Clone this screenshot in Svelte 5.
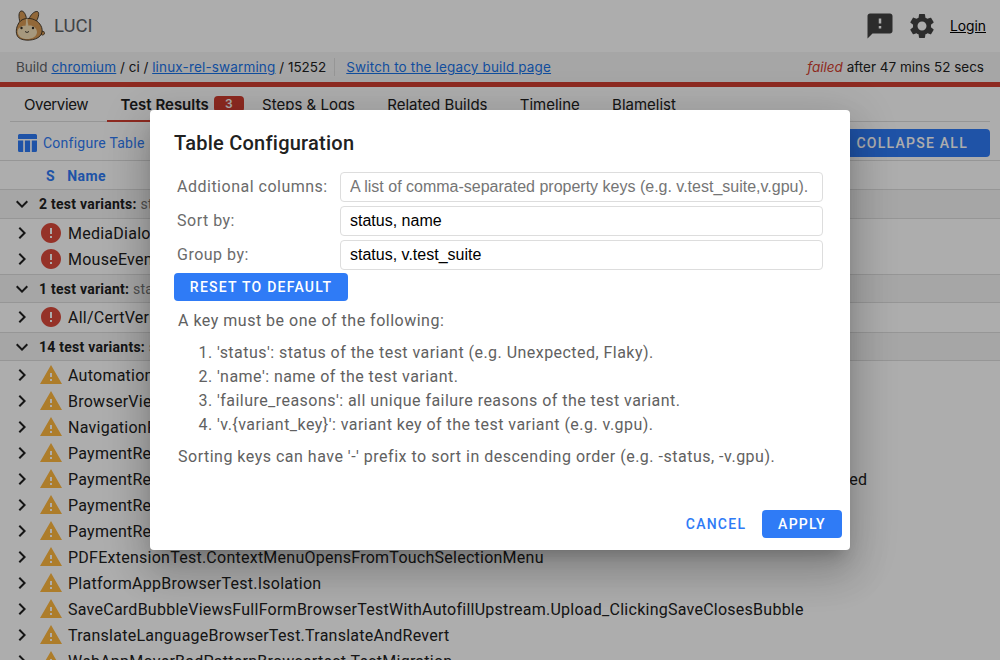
<script>
const groups = [
	{ label: '2 test variants:', rest: 'status = Unexpected', kind: 'error', rows: [
		'MediaDialogViewBrowserTest.PictureInPicture',
		'MouseEventsTest.MouseOver'
	] },
	{ label: '1 test variant:', rest: 'status = Unexpected', kind: 'error', rows: [
		'All/CertVerifierBrowserTest.MockCertVerifierSmokeTest'
	] },
	{ label: '14 test variants:', rest: 'status = Flaky', kind: 'warn', rows: [
		'AutomationManagerAuraBrowserTest.WebAppsAndFocus',
		'BrowserViewTest.GetAccessibleTabModalDialogTitle',
		'NavigationPredictorBrowserTest.PrerenderNavigation',
		'PaymentRequestAbortTest.AbortWhileShowing',
		'PaymentRequestCanMakePaymentQueryTest.QueryQuotaExceededIsReported_WhenPaymentWasCompleted',
		'PaymentRequestCompletionStatusMetricsTest.Completed',
		'PaymentRequestJourneyLoggerTest.NoMatchingCard',
		'PDFExtensionTest.ContextMenuOpensFromTouchSelectionMenu',
		'PlatformAppBrowserTest.Isolation',
		'SaveCardBubbleViewsFullFormBrowserTestWithAutofillUpstream.Upload_ClickingSaveClosesBubble',
		'TranslateLanguageBrowserTest.TranslateAndRevert',
		'WebAppMoverBadPatternBrowsertest.TestMigration'
	] }
];

const tabs = ['Overview', 'Test Results', 'Steps & Logs', 'Related Builds', 'Timeline', 'Blamelist'];

const keys = [
	"'status': status of the test variant (e.g. Unexpected, Flaky).",
	"'name': name of the test variant.",
	"'failure_reasons': all unique failure reasons of the test variant.",
	"'v.{variant_key}': variant key of the test variant (e.g. v.gpu)."
];

let sortBy = 'status, name';
let groupBy = 'status, v.test_suite';
</script>

<div class="page">
	<header class="top">
		<svg class="logo" viewBox="0 0 32 32" width="32" height="32">
			<path d="M5 12 C3.500 7 3.500 2 6 1 C9 0.500 11 5 11.500 9 Z" fill="#d79a55" stroke="#3a3024" stroke-width="0.900"/>
			<path d="M14 9 C15.500 5 19 1 22.500 1.500 C25 3 23 9 20.500 12.500 Z" fill="#d79a55" stroke="#3a3024" stroke-width="0.900"/>
			<path d="M27 21 q3 0 2.500 3 q-1.500 2 -3.500 0.500z" fill="#d79a55" stroke="#3a3024" stroke-width="0.700"/>
			<path d="M6 10.500 C11 7 19 8 23.500 12.500 C27.500 16.500 28.500 22 25 26 C20.500 31 8 31.500 3.500 27.500 C0.500 24.500 1 19 2.500 15.500 C3.200 13.500 4.500 11.800 6 10.500 Z" fill="#d79a55" stroke="#3a3024" stroke-width="0.900"/>
			<path d="M2.500 21.500 C3 17.500 7 15.500 10.500 15.700 C11.200 13 11 10.500 11 8.800 L12.500 8.800 C12.500 11 12.800 13.500 13.500 15.700 C17.500 15 21.500 17.500 22 22 C22 26.500 17 29 12 29 C7 29 2.800 26.500 2.500 21.500 Z" fill="#f5e0b8"/>
			<circle cx="6.500" cy="18" r="1.200" fill="#2f2a24"/>
			<circle cx="18" cy="18" r="1.200" fill="#2f2a24"/>
			<path d="M10 21.500 L12 22.500 L14 21.500" fill="none" stroke="#2f2a24" stroke-width="0.900"/>
		</svg>
		<span class="brand">LUCI</span>
		<div class="top-actions">
			<svg viewBox="0 0 24 24" width="30" height="30" fill="#424242"><path d="M20 2H4c-1.100 0-1.990.900-1.990 2L2 22l4-4h14c1.100 0 2-.900 2-2V4c0-1.100-.900-2-2-2zm-7 12h-2v-2h2v2zm0-4h-2V6h2v4z"/></svg>
			<svg viewBox="0 0 24 24" width="30" height="30" fill="#424242"><path d="M19.140 12.940c.040-.300.060-.610.060-.940 0-.320-.020-.640-.070-.940l2.030-1.580c.180-.140.230-.410.120-.610l-1.920-3.320c-.120-.220-.370-.290-.590-.220l-2.390.960c-.500-.380-1.030-.700-1.620-.940l-.360-2.540c-.040-.240-.240-.410-.480-.410h-3.840c-.240 0-.430.170-.470.410l-.360 2.540c-.590.240-1.130.570-1.620.940l-2.390-.960c-.220-.080-.470 0-.590.220L2.740 8.870c-.120.210-.080.470.120.610l2.030 1.580c-.050.300-.090.630-.090.940s.020.640.070.940l-2.030 1.580c-.180.140-.230.410-.120.610l1.920 3.320c.120.220.370.290.590.220l2.390-.960c.500.380 1.030.700 1.620.940l.360 2.540c.050.240.240.410.480.410h3.840c.240 0 .440-.170.470-.410l.360-2.540c.590-.240 1.130-.560 1.620-.940l2.390.960c.220.080.470 0 .590-.220l1.920-3.320c.120-.220.070-.470-.120-.610l-2.010-1.580zM12 15.600c-1.980 0-3.600-1.620-3.600-3.600s1.620-3.600 3.600-3.600 3.600 1.620 3.600 3.600-1.620 3.600-3.600 3.600z"/></svg>
			<a class="login" href="#login">Login</a>
		</div>
	</header>

	<div class="build-bar">
		<span class="crumbs"><span class="dim">Build</span> <a href="#p">chromium</a> / ci / <a href="#b">linux-rel-swarming</a> / 15252</span>
		<span class="sep"></span>
		<a href="#legacy">Switch to the legacy build page</a>
		<span class="status"><i>failed</i> after 47 mins 52 secs</span>
	</div>
	<div class="status-line"></div>

	<nav class="tabs">
		{#each tabs as tab, i}
			<div class="tab" class:active={i === 1}>
				{tab}{#if i === 1}<span class="count">3</span>{/if}
			</div>
		{/each}
	</nav>

	<div class="toolbar">
		<svg viewBox="0 0 19 18" width="19" height="18" fill="#2f7bf6"><path d="M1.500 0 h16 q1.500 0 1.500 1.500 V5 H0 V1.500 Q0 0 1.500 0z M0 6.500 h5.200 V18 H1.500 Q0 18 0 16.500z M6.900 6.500 h5.200 V18 H6.900z M13.800 6.500 H19 V16.500 q0 1.500-1.500 1.500 h-3.700z"/></svg>
		<span class="configure">Configure Table</span>
		<button class="collapse">COLLAPSE ALL</button>
	</div>

	<div class="thead"><span class="th-s">S</span><span>Name</span></div>

	{#each groups as g}
		<div class="group">
			<svg class="chev" viewBox="0 0 24 24" width="24" height="24"><path d="M7.410 8.590 12 13.170l4.590-4.580L18 10l-6 6-6-6z"/></svg>
			<span><b>{g.label}</b> <span class="rest">{g.rest}</span></span>
		</div>
		<div class="rows">
			{#each g.rows as name}
				<div class="row">
					<svg class="chev" viewBox="0 0 24 24" width="24" height="24"><path d="M8.590 16.590 13.170 12 8.590 7.410 10 6l6 6-6 6z"/></svg>
					{#if g.kind === 'error'}
						<svg viewBox="0 0 24 24" width="24" height="24" fill="#dc4a3c"><path d="M12 2C6.480 2 2 6.480 2 12s4.480 10 10 10 10-4.480 10-10S17.520 2 12 2zm1 15h-2v-2h2v2zm0-4h-2V7h2v6z"/></svg>
					{:else}
						<svg viewBox="0 0 24 24" width="24" height="24" fill="#ffb840"><path d="M1 21h22L12 2 1 21zm12-3h-2v-2h2v2zm0-4h-2v-4h2v4z"/></svg>
					{/if}
					<span class="name">{name}</span>
				</div>
			{/each}
		</div>
	{/each}

	<div class="scrim">
		<div class="dialog">
			<h2>Table Configuration</h2>
			<div class="form">
				<label for="cols">Additional columns:</label>
				<input id="cols" placeholder="A list of comma-separated property keys (e.g. v.test_suite,v.gpu)." />
				<label for="sort">Sort by:</label>
				<input id="sort" bind:value={sortBy} />
				<label for="grp">Group by:</label>
				<input id="grp" bind:value={groupBy} />
			</div>
			<button class="primary reset">RESET TO DEFAULT</button>
			<div class="help">
				<p>A key must be one of the following:</p>
				<ol>
					{#each keys as k}<li>{k}</li>{/each}
				</ol>
				<p>Sorting keys can have '-' prefix to sort in descending order (e.g. -status, -v.gpu).</p>
			</div>
			<div class="actions">
				<button class="text">CANCEL</button>
				<button class="primary apply">APPLY</button>
			</div>
		</div>
	</div>
</div>

<style>
:global(body) {
	background: #fff;
}
.page {
	position: relative;
	width: 1000px;
	height: 660px;
	overflow: hidden;
	font-family: Roboto, sans-serif;
	color: #212121;
	background: #fff;
}
a {
	color: #1a73e8;
}
.top {
	display: flex;
	align-items: center;
	height: 52px;
	padding: 0 14px 0 15px;
	box-sizing: border-box;
}
.logo {
	display: block;
}
.brand {
	margin-left: 7px;
	font: 18.500px Roboto, sans-serif;
	color: #5f6368;
}
.top-actions {
	margin-left: auto;
	display: flex;
	align-items: center;
	gap: 12px;
}
.login {
	margin-left: 1px;
	color: #000;
	font: 13.800px Inter, sans-serif;
}
.build-bar {
	display: flex;
	align-items: center;
	height: 30px;
	padding: 0 16px;
	background: #f5f5f5;
	font: 13.500px Inter, sans-serif;
}
.build-bar a {
	letter-spacing: 0.160px;
}
.dim {
	color: #5f6368;
}
.sep {
	width: 1px;
	height: 18px;
	margin: 0 11px 0 8px;
	background: #ddd;
}
.status {
	margin-left: auto;
}
.status i {
	color: #d23f31;
}
.status-line {
	height: 5px;
	background: #d23f31;
}
.tabs {
	display: flex;
	gap: 4.250px;
	height: 35px;
	margin: 0 10px;
	border-bottom: 1px solid #ddd;
	box-sizing: border-box;
	font: 15px Inter, sans-serif;
}
.tab {
	display: flex;
	align-items: center;
	padding: 1px 14px 0;
	height: 35px;
	box-sizing: border-box;
	border-bottom: 2px solid transparent;
}
.tab:first-child {
	letter-spacing: -0.350px;
}
.tab.active {
	font-weight: 600;
	border-bottom: 2px solid #d23f31;
}
.count {
	margin-left: 5px;
	margin-right: -14px;
	width: 30px;
	text-align: center;
	border-radius: 4px;
	background: #d23f31;
	color: #fff;
	font-size: 12px;
	line-height: 16px;
}
.toolbar {
	display: flex;
	align-items: center;
	height: 39px;
	padding: 4px 10px 0 18px;
	border-bottom: 1px solid #ddd;
	box-sizing: border-box;
}
.configure {
	margin-left: 6px;
	color: #2f7bf6;
	font-size: 14px;
	letter-spacing: 0.250px;
}
.collapse {
	margin-left: auto;
	height: 28px;
	width: 220px;
	border: 0;
	border-radius: 4px;
	background: #2f7bf6;
	color: #fff;
	font: 500 14px Roboto, sans-serif;
	letter-spacing: 1.250px;
	text-align: right;
	padding-right: 22px;
}
.thead {
	display: flex;
	align-items: center;
	height: 29px;
	padding: 1px 0 0 46px;
	gap: 12px;
	border-bottom: 1px solid #ddd;
	box-sizing: border-box;
	color: #2f7bf6;
	font-size: 14px;
	font-weight: 700;
	letter-spacing: 0.500px;
}
.group {
	display: flex;
	align-items: center;
	height: 29px;
	padding-left: 10px;
	gap: 5px;
	background: #f5f5f5;
	border-top: 1px solid #ddd;
	border-bottom: 1px solid #ddd;
	box-sizing: border-box;
	font-size: 14px;
	letter-spacing: 0.250px;
}
.thead + .group {
	border-top: 0;
}
.rest {
	color: #757575;
}
.rows {
	padding: 1px 0 2px;
}
.row {
	display: flex;
	align-items: center;
	height: 26px;
	padding-left: 10px;
}
.row .chev {
	margin-right: 5px;
}
.chev {
	flex: none;
	fill: #212121;
}
.name {
	margin-left: 5px;
	white-space: nowrap;
	font-size: 16px;
	letter-spacing: 0.250px;
}
.scrim {
	position: absolute;
	inset: 0;
	display: flex;
	align-items: center;
	justify-content: center;
	background: rgba(0, 0, 0, 0.32);
}
.dialog {
	position: relative;
	box-sizing: border-box;
	width: 700px;
	height: 440px;
	padding: 20px 24px;
	border-radius: 4px;
	background: #fff;
	box-shadow: 0 11px 15px -7px rgba(0,0,0,.2), 0 24px 38px 3px rgba(0,0,0,.14), 0 9px 46px 8px rgba(0,0,0,.12);
}
h2 {
	margin: 0;
	font: 500 20px/26px Roboto, sans-serif;
	letter-spacing: 0.250px;
	color: #212121;
}
.form {
	display: grid;
	grid-template-columns: 163px 483px;
	row-gap: 4px;
	margin-top: 16px;
	padding-left: 3px;
	align-items: center;
}
label {
	padding-bottom: 1px;
	font-size: 16px;
	letter-spacing: 0.500px;
	color: #6b6b6b;
}
input {
	height: 30px;
	box-sizing: border-box;
	width: 483px;
	padding: 0 9px;
	border: 1px solid #ddd;
	border-radius: 4px;
	font: 16px "Liberation Sans", Arial, sans-serif;
	color: #000;
	outline: none;
}
input::placeholder {
	color: #757575;
}
button {
	cursor: pointer;
}
.primary {
	display: block;
	border: 0;
	border-radius: 4px;
	background: #2f7bf6;
	color: #fff;
	height: 28px;
	font: 500 14px Roboto, sans-serif;
	letter-spacing: 1.250px;
}
.reset {
	width: 174px;
	margin-top: 3px;
}
.help {
	padding-left: 4px;
	color: #616161;
	font-size: 16px;
	letter-spacing: 0.500px;
}
.help p {
	margin: 0;
	line-height: 24px;
}
.help p:first-child {
	margin-top: 8px;
}
ol {
	margin: 8px 0;
	padding-left: 39px;
}
li {
	line-height: 24px;
	letter-spacing: 0.460px;
}
.actions {
	position: absolute;
	right: 8px;
	bottom: 12px;
	display: flex;
	align-items: center;
	gap: 8px;
}
.text {
	width: 76px;
	height: 28px;
	border: 0;
	background: none;
	color: #2f7bf6;
	font: 500 14px Roboto, sans-serif;
	letter-spacing: 1.250px;
}
.apply {
	width: 80px;
}
</style>
